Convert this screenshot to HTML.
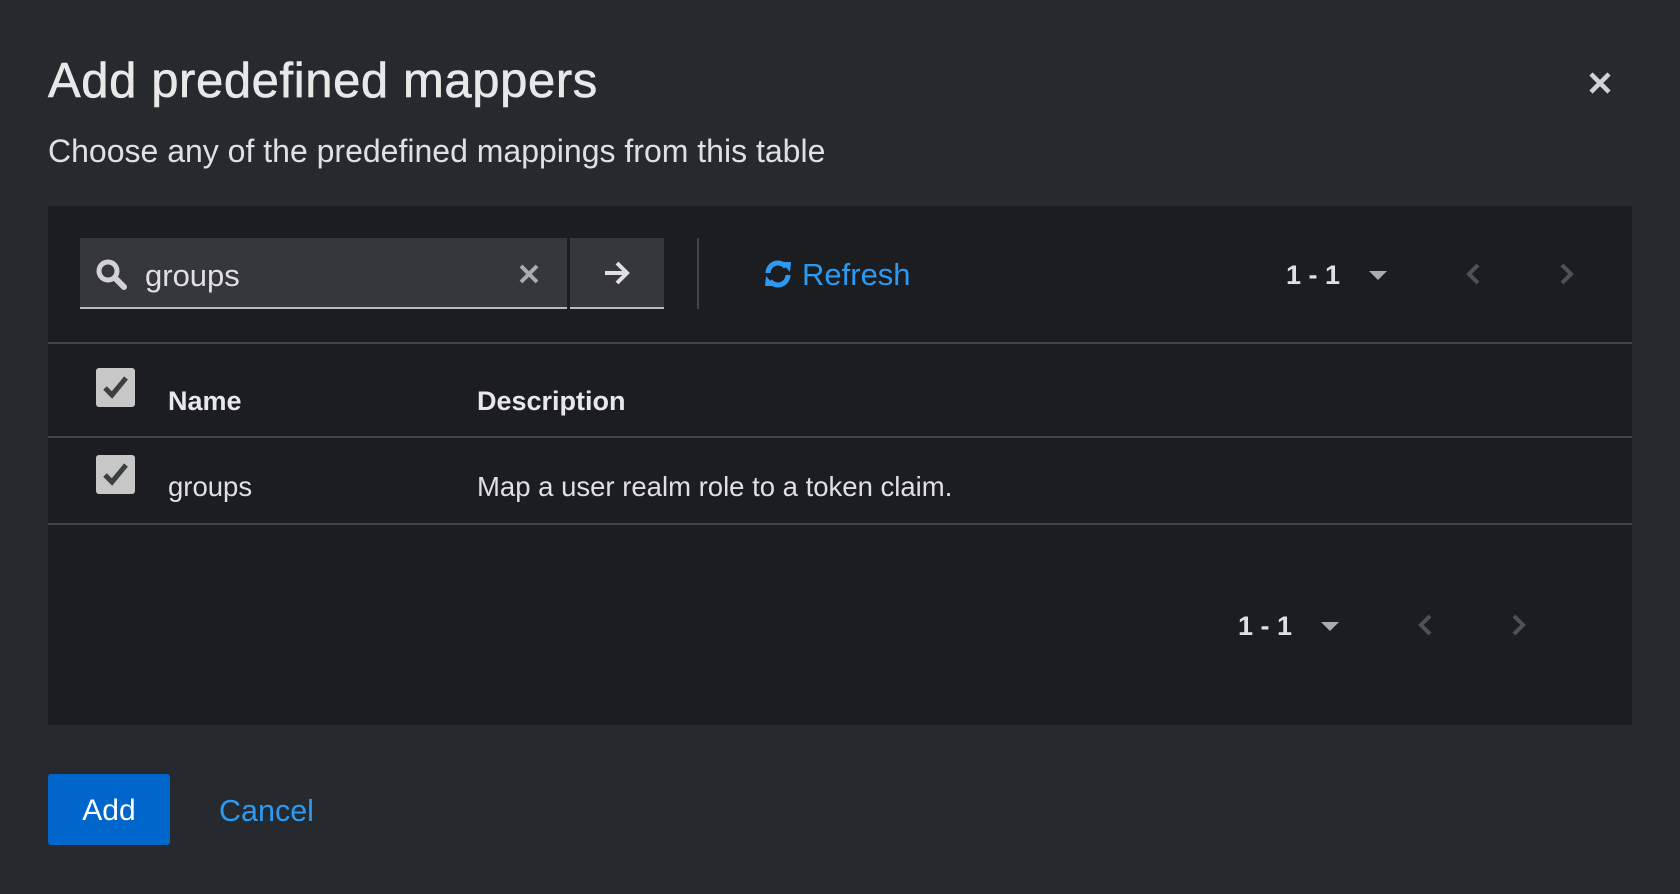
<!DOCTYPE html>
<html><head><meta charset="utf-8"><style>
*{margin:0;padding:0;box-sizing:border-box}
body{width:1680px;height:894px;background:#26292e;font-family:"Liberation Sans",sans-serif;color:#e0e0e0;position:relative;overflow:hidden}
.a{position:absolute;white-space:nowrap}
.line{position:absolute;left:48px;width:1584px;height:2px;background:#444548}
.cb{position:absolute;width:39px;height:39px;background:#c7c7c7;border-radius:3px}
.cb svg{position:absolute;left:6px;top:6px}
</style></head><body>
<div class="a" style="left:48px;top:53px;font-size:49px;color:#e8e8e8;letter-spacing:0.6px;-webkit-text-stroke:0.6px #e8e8e8">Add predefined mappers</div>
<svg class="a" style="left:1588px;top:71px" width="24" height="24" viewBox="0 0 24 24"><path d="M3 3L21 21M21 3L3 21" stroke="#d2d2d2" stroke-width="4.5"/></svg>
<div class="a" style="left:48px;top:133px;font-size:32px;color:#e0e0e0">Choose any of the predefined mappings from this table</div>

<div class="a" style="left:48px;top:206px;width:1584px;height:519px;background:#1b1d21"></div>
<div class="a" style="left:80px;top:238px;width:487px;height:71px;background:#36373a;border-bottom:2px solid #b8bbbe"></div>
<div class="a" style="left:570px;top:238px;width:94px;height:71px;background:#36373a;border-bottom:2px solid #b8bbbe"></div>
<svg class="a" style="left:95px;top:258px" width="34" height="34" viewBox="0 0 34 34"><circle cx="13" cy="13" r="9" stroke="#d2d2d2" stroke-width="5" fill="none"/><path d="M20 20L29 29" stroke="#d2d2d2" stroke-width="6" stroke-linecap="round"/></svg>
<div class="a" style="left:145px;top:258px;font-size:31px;color:#e0e0e0">groups</div>
<svg class="a" style="left:518px;top:263px" width="22" height="22" viewBox="0 0 22 22"><path d="M3 3L19 19M19 3L3 19" stroke="#aaabac" stroke-width="4"/></svg>
<svg class="a" style="left:602px;top:258px" width="30" height="30" viewBox="0 0 30 30"><path d="M3 15H25M15 5L25 15L15 25" stroke="#e0e0e0" stroke-width="4" fill="none"/></svg>
<div class="a" style="left:697px;top:238px;width:2px;height:71px;background:#444548"></div>
<svg class="a" style="left:762px;top:258px" width="32" height="32" viewBox="0 0 32 32"><path d="M6 15A10 10 0 0 1 24 9" stroke="#2b9af3" stroke-width="5" fill="none"/><path d="M19 4L29 4L28 14Z" fill="#2b9af3"/><path d="M26 17A10 10 0 0 1 8 23" stroke="#2b9af3" stroke-width="5" fill="none"/><path d="M13 28L3 28L4 18Z" fill="#2b9af3"/></svg>
<div class="a" style="left:802px;top:257px;font-size:31px;color:#2b9af3">Refresh</div>
<div class="a" style="left:1286px;top:260px;font-size:27px;color:#e0e0e0;font-weight:bold">1 - 1</div>
<svg class="a" style="left:1369px;top:269px" width="18" height="12"><path d="M0 2H18L9 11Z" fill="#aaabac"/></svg>
<svg class="a" style="left:1464px;top:262px" width="18" height="24"><path d="M14 3L5 12L14 21" stroke="#4f5255" stroke-width="4" fill="none"/></svg>
<svg class="a" style="left:1558px;top:262px" width="18" height="24"><path d="M4 3L13 12L4 21" stroke="#4f5255" stroke-width="4" fill="none"/></svg>

<div class="line" style="top:342px"></div>
<div class="cb" style="left:96px;top:368px"><svg width="27" height="27" viewBox="0 0 27 27"><path d="M3 14L10 21L24 4" stroke="#3c3f42" stroke-width="5" fill="none"/></svg></div>
<div class="a" style="left:168px;top:386px;font-size:27px;font-weight:bold;color:#e8e8e8">Name</div>
<div class="a" style="left:477px;top:386px;font-size:27px;font-weight:bold;color:#e8e8e8">Description</div>
<div class="line" style="top:436px"></div>
<div class="cb" style="left:96px;top:455px"><svg width="27" height="27" viewBox="0 0 27 27"><path d="M3 14L10 21L24 4" stroke="#3c3f42" stroke-width="5" fill="none"/></svg></div>
<div class="a" style="left:168px;top:471px;font-size:27.5px;color:#e0e0e0">groups</div>
<div class="a" style="left:477px;top:471px;font-size:27.5px;color:#e0e0e0">Map a user realm role to a token claim.</div>
<div class="line" style="top:523px"></div>

<div class="a" style="left:1238px;top:611px;font-size:27px;color:#e0e0e0;font-weight:bold">1 - 1</div>
<svg class="a" style="left:1321px;top:620px" width="18" height="12"><path d="M0 2H18L9 11Z" fill="#aaabac"/></svg>
<svg class="a" style="left:1416px;top:613px" width="18" height="24"><path d="M14 3L5 12L14 21" stroke="#4f5255" stroke-width="4" fill="none"/></svg>
<svg class="a" style="left:1510px;top:613px" width="18" height="24"><path d="M4 3L13 12L4 21" stroke="#4f5255" stroke-width="4" fill="none"/></svg>

<div class="a" style="left:48px;top:774px;width:122px;height:71px;background:#0066cc;border-radius:3px;color:#fff;font-size:30px;text-align:center;line-height:73px">Add</div>
<div class="a" style="left:219px;top:794px;font-size:30.5px;color:#2b9af3">Cancel</div>
</body></html>
